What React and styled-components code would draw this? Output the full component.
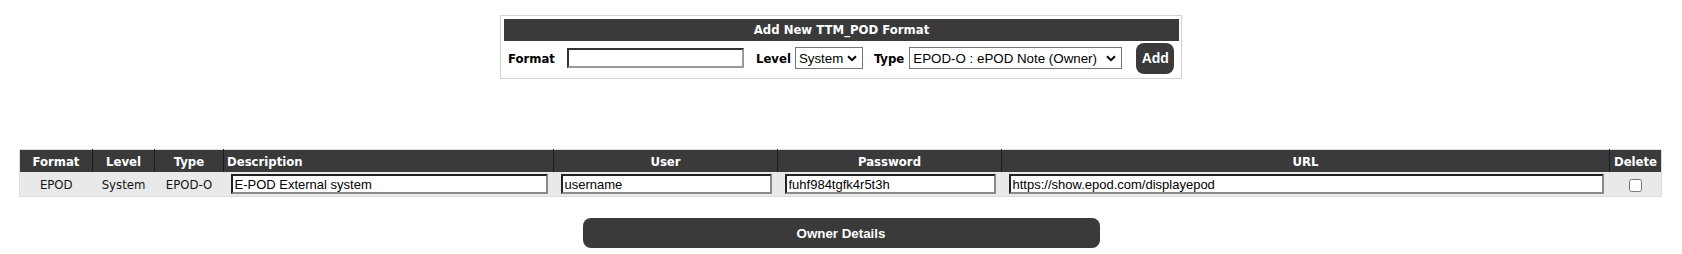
import React from 'react';
import styled, { createGlobalStyle } from 'styled-components';

const GlobalStyle = createGlobalStyle`
  body {
    margin: 8px;
    background: #fff;
    font-family: "DejaVu Sans Condensed", "DejaVu Sans", sans-serif;
    font-size: 13px;
  }
`;

const formats = [
  {
    format: 'EPOD',
    level: 'System',
    type: 'EPOD-O',
    description: 'E-POD External system',
    user: 'username',
    password: 'fuhf984tgfk4r5t3h',
    url: 'https://show.epod.com/displayepod',
  },
];

const columns = [
  { label: 'Format', width: 73, align: 'center' },
  { label: 'Level', width: 62, align: 'center' },
  { label: 'Type', width: 69, align: 'center' },
  { label: 'Description', width: 330, align: 'left' },
  { label: 'User', width: 224, align: 'center' },
  { label: 'Password', width: 224, align: 'center' },
  { label: 'URL', width: 608, align: 'center' },
  { label: 'Delete', width: 52, align: 'center' },
];

const Chevron = () => (
  <ChevronIcon width="10" height="7" viewBox="0 0 10 7">
    <path d="M1 1.2 L5 5.2 L9 1.2" fill="none" stroke="#000" strokeWidth="2" />
  </ChevronIcon>
);

const DropDown = ({ width, children, ...rest }) => (
  <SelectWrap $width={width}>
    <Select {...rest}>{children}</Select>
    <Chevron />
  </SelectWrap>
);

const App = () => {
  return (
    <>
      <GlobalStyle />
      <Panel>
        <PanelTitle>Add New TTM_POD Format</PanelTitle>
        <PanelRow>
          <Label $left={4} $right={12}>Format</Label>
          <TextBox $width={177} />
          <Label $left={12} $right={4}>Level</Label>
          <DropDown width={68} defaultValue="System">
            <option>System</option>
            <option>User</option>
          </DropDown>
          <Label $left={11} $right={5}>Type</Label>
          <DropDown width={213} defaultValue="EPOD-O">
            <option value="EPOD-O">EPOD-O : ePOD Note (Owner)</option>
          </DropDown>
          <AddButton>Add</AddButton>
        </PanelRow>
      </Panel>

      <Grid>
        <colgroup>
          {columns.map((c) => (
            <col key={c.label} style={{ width: c.width }} />
          ))}
        </colgroup>
        <thead>
          <tr>
            {columns.map((c) => (
              <Th key={c.label} $align={c.align}>{c.label}</Th>
            ))}
          </tr>
        </thead>
        <tbody>
          {formats.map((f) => (
            <tr key={f.format}>
              <Td>{f.format}</Td>
              <Td>{f.level}</Td>
              <Td>{f.type}</Td>
              <InputCell><CellInput defaultValue={f.description} /></InputCell>
              <InputCell><CellInput defaultValue={f.user} /></InputCell>
              <InputCell><CellInput defaultValue={f.password} /></InputCell>
              <InputCell><CellInput defaultValue={f.url} /></InputCell>
              <Td><Check type="checkbox" /></Td>
            </tr>
          ))}
        </tbody>
      </Grid>

      <Footer>
        <OwnerButton>Owner Details</OwnerButton>
      </Footer>
    </>
  );
};

const Panel = styled.div`
  width: 675px;
  margin: 7px auto 0;
  border: 1px solid #d3d3d3;
  padding: 3px 2px 3px 3px;
`;

const PanelTitle = styled.div`
  height: 22px;
  line-height: 22px;
  background: #3a3a3a;
  color: #fff;
  font-weight: bold;
  font-size: 13px;
  text-align: center;
`;

const PanelRow = styled.div`
  display: flex;
  align-items: center;
  height: 34px;
`;

const Label = styled.span`
  font-weight: bold;
  font-size: 13px;
  color: #000;
  margin-left: ${(p) => p.$left}px;
  margin-right: ${(p) => p.$right}px;
`;

const TextBox = styled.input`
  box-sizing: border-box;
  width: ${(p) => p.$width}px;
  height: 20px;
  border: 2px solid;
  border-color: #333 #999 #999 #333;
  padding: 1px 2px;
  font-family: "Liberation Sans", Arial, sans-serif;
  font-size: 13px;
`;

const SelectWrap = styled.div`
  position: relative;
  width: ${(p) => p.$width}px;
  height: 22px;
`;

const Select = styled.select`
  appearance: none;
  box-sizing: border-box;
  width: 100%;
  height: 100%;
  border: 1px solid #767676;
  border-radius: 0;
  background: #fff;
  color: #000;
  font-family: "Liberation Sans", Arial, sans-serif;
  font-size: 13.33px;
  padding: 0 18px 0 3px;
  outline: none;
`;

const ChevronIcon = styled.svg`
  position: absolute;
  right: 6px;
  top: 8px;
  pointer-events: none;
`;

const AddButton = styled.button`
  margin-left: 14px;
  width: 38px;
  height: 31px;
  border: none;
  border-radius: 8px;
  background: #3a3a3a;
  color: #fff;
  font-family: "Liberation Sans", Arial, sans-serif;
  font-weight: bold;
  font-size: 14px;
  padding: 0;
`;

const Grid = styled.table`
  table-layout: fixed;
  width: 1643px;
  margin: 70px 0 0 11px;
  border-collapse: collapse;
  border: 1px solid #dcdcdc;
`;

const Th = styled.th`
  background: #3a3a3a;
  color: #fff;
  font-weight: bold;
  font-size: 13px;
  height: 22px;
  padding: 0 3px;
  text-align: ${(p) => p.$align};
  border-left: 1px solid #1c1c1c;
  &:first-child {
    border-left: none;
  }
`;

const Td = styled.td`
  background: #e9e9e9;
  height: 24px;
  padding: 0;
  text-align: center;
  font-size: 13px;
  color: #111;
  vertical-align: middle;
`;

const InputCell = styled(Td)`
  padding: 0 6px 0 7px;
`;

const CellInput = styled.input`
  display: block;
  box-sizing: border-box;
  width: 100%;
  height: 20px;
  border: 2px solid;
  border-color: #222 #8a8a8a #8a8a8a #222;
  background: #fff;
  padding: 0 2px;
  font-family: "Liberation Sans", Arial, sans-serif;
  font-size: 13px;
  color: #000;
`;

const Check = styled.input`
  margin: 0;
  width: 13px;
  height: 13px;
  vertical-align: middle;
`;

const Footer = styled.div`
  display: flex;
  justify-content: center;
  margin-top: 21px;
`;

const OwnerButton = styled.button`
  width: 517px;
  height: 30px;
  border: none;
  border-radius: 8px;
  background: #3a3a3a;
  color: #fff;
  font-family: "Liberation Sans", Arial, sans-serif;
  font-weight: bold;
  font-size: 13.33px;
`;

export default App;
